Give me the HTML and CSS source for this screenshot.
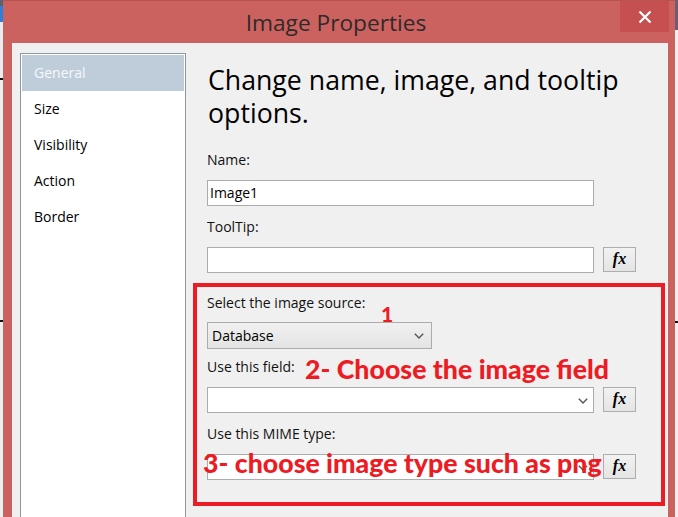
FILE: index.html
```html
<!DOCTYPE html>
<html lang="en">
<head>
<meta charset="utf-8">
<title>Image Properties</title>
<link rel="stylesheet" href="styles.css">
</head>
<body>
<div class="screen">
  <div class="desk desk-left"></div>
  <div class="window">
    <div class="titlebar">
      <span class="title">Image Properties</span>
      <span class="close">
        <svg width="14" height="14" viewBox="0 0 14 14"><path d="M1.5 1.5 L12.5 12.5 M12.5 1.5 L1.5 12.5" stroke="#fff" stroke-width="2.2" fill="none"/></svg>
      </span>
    </div>
    <div class="client">
      <ul class="nav">
        <li class="nav-item is-selected">General</li>
        <li class="nav-item">Size</li>
        <li class="nav-item">Visibility</li>
        <li class="nav-item">Action</li>
        <li class="nav-item">Border</li>
      </ul>
      <div class="content">
        <h1 class="heading">Change name, image, and tooltip options.</h1>
        <div class="label">Name:</div>
        <div class="row"><div class="textbox textbox-full">Image1</div></div>
        <div class="label label-gap">ToolTip:</div>
        <div class="row"><div class="textbox"></div><span class="fx">fx</span></div>
        <section class="highlight">
          <div class="label label-first">Select the image source:</div>
          <div class="select">
            <span>Database</span>
            <svg class="chev" width="10" height="6" viewBox="0 0 10 6"><path d="M0.8 0.8 L5 5 L9.2 0.8" stroke="#555" stroke-width="1.4" fill="none"/></svg>
          </div>
          <div class="label label-after-select">Use this field:</div>
          <div class="row">
            <div class="textbox combo"><svg class="chev" width="10" height="6" viewBox="0 0 10 6"><path d="M0.8 0.8 L5 5 L9.2 0.8" stroke="#555" stroke-width="1.4" fill="none"/></svg></div>
            <span class="fx">fx</span>
          </div>
          <div class="label label-gap">Use this MIME type:</div>
          <div class="row">
            <div class="textbox combo"><svg class="chev" width="10" height="6" viewBox="0 0 10 6"><path d="M0.8 0.8 L5 5 L9.2 0.8" stroke="#555" stroke-width="1.4" fill="none"/></svg></div>
            <span class="fx">fx</span>
          </div>
          <span class="note note-1">1</span>
          <span class="note note-2">2- Choose the image field</span>
          <span class="note note-3">3- choose image type such as png</span>
        </section>
      </div>
    </div>
  </div>
  <div class="desk desk-right"></div>
</div>
</body>
</html>
```
FILE: styles.css
```css
* { box-sizing: border-box; }

body {
  margin: 0;
  font-family: "Open Sans", "Noto Sans", sans-serif;
  background: #f0f0f0;
}

.screen {
  width: 678px;
  height: 517px;
  display: flex;
  overflow: hidden;
}

.desk { width: 3px; flex: none; }
.desk-left {
  background: linear-gradient(#5a6270 0 6px, #2f7fd6 6px 22px, #e9ecef 22px 78px, #111 78px 80px, #eef0f2 80px 320px, #111 320px 322px, #eef0f2 322px);
}
.desk-right {
  background: linear-gradient(#6e5d72 0 30px, #eef0f2 30px 321px, #111 321px 323px, #eef0f2 323px);
}

.window {
  width: 672px;
  flex: none;
  background: #cc625f;
  border-top: 1px solid #b65450;
  padding: 0 7px 0 9px;
  display: flex;
  flex-direction: column;
}

.titlebar {
  height: 42px;
  margin: 0 -7px 0 -9px;
  padding-right: 6px;
  display: grid;
  grid-template-columns: 1fr auto 1fr;
  align-items: start;
}

.title {
  grid-column: 2;
  font-size: 22.7px;
  line-height: 43px;
  color: #2e2a2a;
}

.close {
  grid-column: 3;
  justify-self: end;
  width: 49px;
  height: 31px;
  background: #c64f50;
  display: flex;
  align-items: center;
  justify-content: center;
}

.client {
  flex: 1;
  background: #f0f0f0;
  display: flex;
  align-items: flex-start;
}

.nav {
  list-style: none;
  margin: 10px 0 0 8px;
  padding: 1px;
  width: 166px;
  height: 480px;
  flex: none;
  background: #fff;
  border: 1px solid #8d98a4;
  border-bottom: none;
}

.nav-item {
  height: 36px;
  line-height: 36px;
  padding-left: 12px;
  font-size: 14px;
  color: #000;
}

.nav-item.is-selected {
  background: #bfcddb;
  color: #f6f8fa;
}

.content {
  margin-left: 21px;
  width: 429px;
  padding-top: 20px;
  flex: none;
}

.heading {
  margin: 0 0 21px 1px;
  font-size: 26.7px;
  line-height: 33px;
  font-weight: 400;
  color: #000;
}

.label {
  font-size: 14px;
  line-height: 20px;
  height: 20px;
  margin-bottom: 10px;
  color: #111;
  white-space: nowrap;
}

.label-gap { margin-top: 11px; }

.row {
  display: flex;
  gap: 9px;
  height: 26px;
}

.textbox {
  width: 387px;
  height: 26px;
  background: #fff;
  border: 1px solid #acacac;
  font-size: 14px;
  line-height: 24px;
  padding-left: 2px;
  color: #000;
  position: relative;
}

.combo .chev {
  position: absolute;
  right: 5px;
  top: 10px;
}

.fx {
  width: 33px;
  height: 25px;
  border: 1px solid #adadad;
  background: linear-gradient(#f2f2f2, #e4e4e4);
  font-family: "Liberation Serif", "Times New Roman", serif;
  font-weight: bold;
  font-style: italic;
  font-size: 16px;
  line-height: 22px;
  text-align: center;
  color: #000;
}

.highlight {
  position: relative;
  margin: 10px -29px 0 -14px;
  border: 4px solid #ed1c24;
  padding: 6px 25px 22px 10px;
}

.label-first { margin-bottom: 9px; }

.select {
  width: 225px;
  height: 27px;
  border: 1px solid #acacac;
  background: linear-gradient(#f0f0f0, #e4e4e4);
  font-size: 14px;
  padding: 0 7px 0 4px;
  display: flex;
  align-items: center;
  justify-content: space-between;
  color: #000;
}

.label-after-select { margin-top: 8px; }

.note {
  position: absolute;
  color: #ed1c24;
  font-family: "Lato", sans-serif;
  font-weight: 900;
  white-space: nowrap;
  line-height: 1;
}

.note-1 { left: 184px; top: 16px; font-size: 21px; }
.note-2 { left: 108px; top: 69px; font-size: 26.7px; }
.note-3 { left: 6px; top: 163px; font-size: 26.7px; }
```
